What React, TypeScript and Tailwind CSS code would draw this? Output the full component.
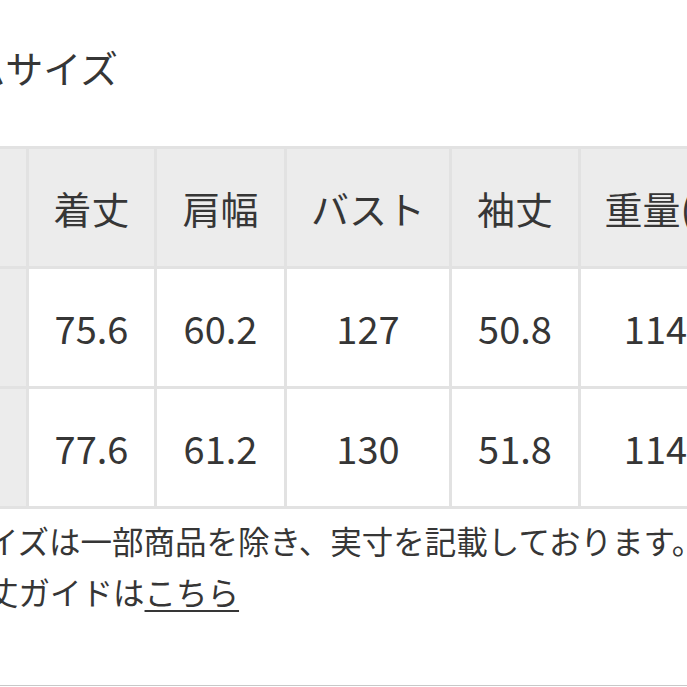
const headers = ['サイズ', '着丈', '肩幅', 'バスト', '袖丈', '重量(g)']

const rows = [
  ['M', '75.6', '60.2', '127', '50.8', '1145'],
  ['L', '77.6', '61.2', '130', '51.8', '1148'],
]

export default function App() {
  return (
    <div className="h-[687px] w-[687px] overflow-hidden bg-white font-['Noto_Sans_CJK_JP','Noto_Sans',sans-serif] text-[#363636]">
      <h2 className="ml-[-143px] whitespace-nowrap pt-[44px] text-[38px] leading-[46px] font-normal">
        アイテムサイズ
      </h2>

      <div className="ml-[-140px] mt-[56px] grid w-fit grid-cols-[163px_125px_127px_162px_126px_170px] gap-[3px] bg-[#e2e2e2] p-[3px] text-[38px]">
        {headers.map((h) => (
          <div key={h} className="flex h-[117px] items-center justify-center whitespace-nowrap bg-[#ececec]">
            {h}
          </div>
        ))}
        {rows.map((row) =>
          row.map((cell, i) => (
            <div
              key={row[0] + i}
              className={
                i === 0
                  ? 'flex h-[117px] items-center justify-center bg-[#ececec]'
                  : 'flex h-[117px] items-center justify-center bg-white'
              }
            >
              {cell}
            </div>
          ))
        )}
      </div>

      <div className="ml-[-76px] mt-[6px] whitespace-nowrap text-[31.5px] leading-[51px]">
        <p>※サイズは一部商品を除き、実寸を記載しております。</p>
        <p>
          ※着丈ガイドは
          <a href="#" className="underline decoration-2 underline-offset-[5px]">
            こちら
          </a>
        </p>
      </div>

      <div className="mt-[68px] border-t border-[#c8c8c8]" />
    </div>
  )
}
